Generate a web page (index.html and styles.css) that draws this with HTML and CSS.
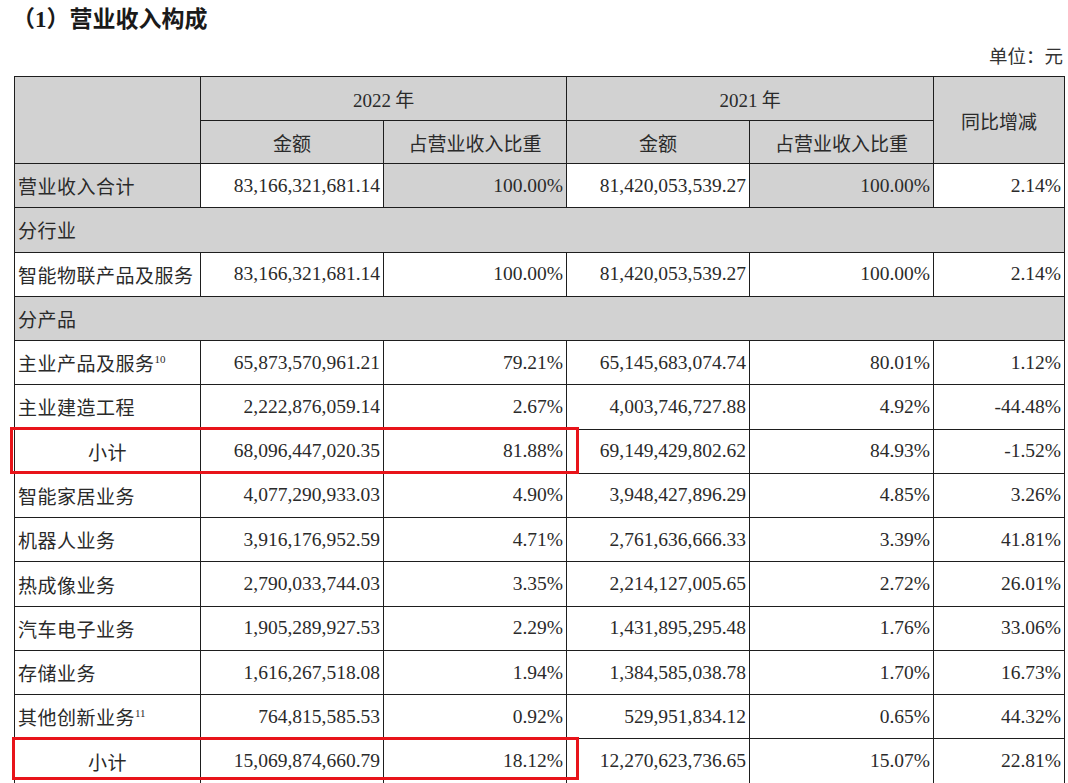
FILE: index.html
```html
<!DOCTYPE html>
<html lang="zh-CN">
<head>
<meta charset="utf-8">
<title>营业收入构成</title>
<link rel="stylesheet" href="styles.css">
</head>
<body>
<div class="page">
  <h1 class="title">（<span class="num">1</span>）营业收入构成</h1>
  <div class="unit">单位：元</div>
  <div class="table-wrap">
    <table class="rev">
      <colgroup>
        <col class="c-label">
        <col class="c-amt">
        <col class="c-pct">
        <col class="c-amt">
        <col class="c-pct2">
        <col class="c-yoy">
      </colgroup>
      <thead>
        <tr class="h1">
          <th rowspan="2" class="gray"></th>
          <th colspan="2" class="gray"><span class="num">2022</span> 年</th>
          <th colspan="2" class="gray"><span class="num">2021</span> 年</th>
          <th rowspan="2" class="gray">同比增减</th>
        </tr>
        <tr class="h2">
          <th class="gray">金额</th>
          <th class="gray">占营业收入比重</th>
          <th class="gray">金额</th>
          <th class="gray">占营业收入比重</th>
        </tr>
      </thead>
      <tbody>
        <tr>
          <td class="label gray">营业收入合计</td>
          <td class="n">83,166,321,681.14</td>
          <td class="n gray">100.00%</td>
          <td class="n">81,420,053,539.27</td>
          <td class="n gray">100.00%</td>
          <td class="n">2.14%</td>
        </tr>
        <tr>
          <td class="label gray" colspan="6">分行业</td>
        </tr>
        <tr>
          <td class="label">智能物联产品及服务</td>
          <td class="n">83,166,321,681.14</td>
          <td class="n">100.00%</td>
          <td class="n">81,420,053,539.27</td>
          <td class="n">100.00%</td>
          <td class="n">2.14%</td>
        </tr>
        <tr>
          <td class="label gray" colspan="6">分产品</td>
        </tr>
        <tr>
          <td class="label">主业产品及服务<sup class="fn">10</sup></td>
          <td class="n">65,873,570,961.21</td>
          <td class="n">79.21%</td>
          <td class="n">65,145,683,074.74</td>
          <td class="n">80.01%</td>
          <td class="n">1.12%</td>
        </tr>
        <tr>
          <td class="label">主业建造工程</td>
          <td class="n">2,222,876,059.14</td>
          <td class="n">2.67%</td>
          <td class="n">4,003,746,727.88</td>
          <td class="n">4.92%</td>
          <td class="n">-44.48%</td>
        </tr>
        <tr>
          <td class="sub">小计</td>
          <td class="n">68,096,447,020.35</td>
          <td class="n">81.88%</td>
          <td class="n">69,149,429,802.62</td>
          <td class="n">84.93%</td>
          <td class="n">-1.52%</td>
        </tr>
        <tr>
          <td class="label">智能家居业务</td>
          <td class="n">4,077,290,933.03</td>
          <td class="n">4.90%</td>
          <td class="n">3,948,427,896.29</td>
          <td class="n">4.85%</td>
          <td class="n">3.26%</td>
        </tr>
        <tr>
          <td class="label">机器人业务</td>
          <td class="n">3,916,176,952.59</td>
          <td class="n">4.71%</td>
          <td class="n">2,761,636,666.33</td>
          <td class="n">3.39%</td>
          <td class="n">41.81%</td>
        </tr>
        <tr>
          <td class="label">热成像业务</td>
          <td class="n">2,790,033,744.03</td>
          <td class="n">3.35%</td>
          <td class="n">2,214,127,005.65</td>
          <td class="n">2.72%</td>
          <td class="n">26.01%</td>
        </tr>
        <tr>
          <td class="label">汽车电子业务</td>
          <td class="n">1,905,289,927.53</td>
          <td class="n">2.29%</td>
          <td class="n">1,431,895,295.48</td>
          <td class="n">1.76%</td>
          <td class="n">33.06%</td>
        </tr>
        <tr>
          <td class="label">存储业务</td>
          <td class="n">1,616,267,518.08</td>
          <td class="n">1.94%</td>
          <td class="n">1,384,585,038.78</td>
          <td class="n">1.70%</td>
          <td class="n">16.73%</td>
        </tr>
        <tr>
          <td class="label">其他创新业务<sup class="fn">11</sup></td>
          <td class="n">764,815,585.53</td>
          <td class="n">0.92%</td>
          <td class="n">529,951,834.12</td>
          <td class="n">0.65%</td>
          <td class="n">44.32%</td>
        </tr>
        <tr>
          <td class="sub">小计</td>
          <td class="n">15,069,874,660.79</td>
          <td class="n">18.12%</td>
          <td class="n">12,270,623,736.65</td>
          <td class="n">15.07%</td>
          <td class="n">22.81%</td>
        </tr>
      </tbody>
    </table>
    <div class="mark mark-1"></div>
    <div class="mark mark-2"></div>
  </div>
</div>
</body>
</html>
```
FILE: styles.css
```css
html, body {
  margin: 0;
  padding: 0;
  background: #ffffff;
}

.page {
  width: 1068px;
  height: 783px;
  overflow: hidden;
  font-family: "Noto Sans CJK SC", "Liberation Serif", sans-serif;
  color: #262626;
}

.num {
  font-family: "Liberation Serif", "Noto Sans CJK SC", serif;
}

.title {
  margin: 0;
  padding: 4px 0 0 12px;
  height: 26px;
  line-height: 26px;
  font-size: 23px;
  font-weight: 700;
  color: #1a1a1a;
}

.unit {
  margin-top: 13px;
  height: 24px;
  line-height: 24px;
  padding-right: 5px;
  text-align: right;
  font-size: 18.5px;
  color: #333;
}

.table-wrap {
  position: relative;
  margin-top: 9px;
  padding-left: 14px;
}

.rev {
  border-collapse: collapse;
  table-layout: fixed;
  width: 1050px;
  font-size: 19px;
}

.c-label { width: 186px; }
.c-amt { width: 183px; }
.c-pct { width: 183px; }
.c-pct2 { width: 184px; }
.c-yoy { width: 131px; }

.rev th,
.rev td {
  border: 1.5px solid #1e1e1e;
  padding: 0 3px;
  overflow: hidden;
  white-space: nowrap;
  font-weight: 400;
  color: #2a2a2a;
}

.rev .h1 { height: 44px; }
.rev .h2 { height: 43px; }
.rev tbody tr { height: 44.28px; }

.rev th {
  text-align: center;
  font-size: 19px;
}

.gray {
  background: #d2d2d2;
}

.label {
  text-align: left;
  letter-spacing: 0.5px;
}

.sub {
  text-align: center;
  letter-spacing: 0.5px;
}

.n {
  text-align: right;
  font-family: "Liberation Serif", serif;
  font-size: 19.5px;
}

.fn {
  font-family: "Liberation Serif", serif;
  font-size: 11px;
  vertical-align: 8px;
  line-height: 0;
  letter-spacing: 0;
}

.mark {
  position: absolute;
  border: 3px solid #e8141a;
  box-sizing: border-box;
  pointer-events: none;
}

.mark-1 {
  left: 10px;
  top: 351px;
  width: 569px;
  height: 47px;
}

.mark-2 {
  left: 12px;
  top: 661px;
  width: 567px;
  height: 43px;
}
```
